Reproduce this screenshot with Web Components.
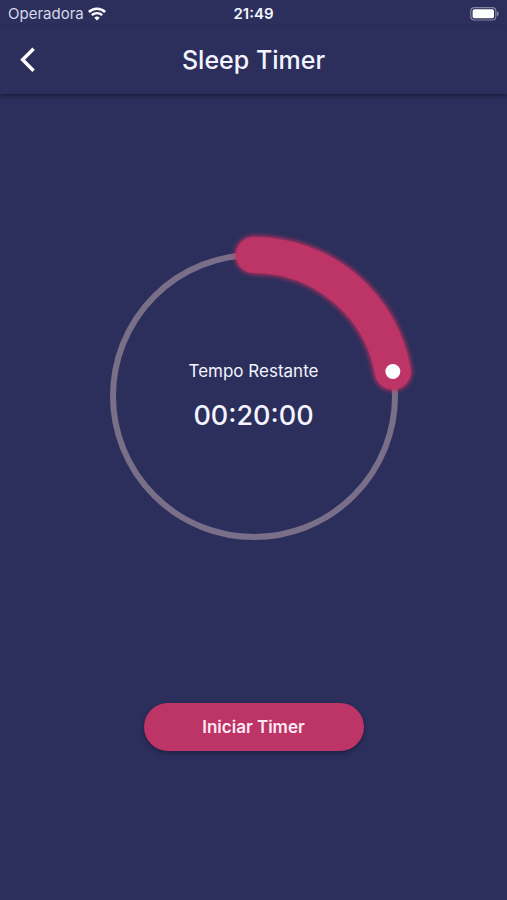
<!DOCTYPE html>
<html lang="pt-BR">
<head>
<meta charset="utf-8">
<meta name="viewport" content="width=device-width, initial-scale=1">
<title>Sleep Timer</title>
<style>
  :root {
    --bg: #2c2f5b;
    --accent: #bd3466;
    --track: #7a6f89;
    --text: #f3f4ff;
  }
  body {
    margin: 0;
    background: var(--bg);
    color: var(--text);
    font-family: Inter, "Liberation Sans", sans-serif;
  }
</style>
</head>
<body>
<sleep-timer-app>
  <status-bar slot="status" carrier="Operadora" time="21:49"></status-bar>
  <app-bar slot="header">Sleep Timer</app-bar>
  <timer-dial slot="dial" minutes="20" max="90">Tempo Restante</timer-dial>
  <pill-button slot="action">Iniciar Timer</pill-button>
</sleep-timer-app>

<script>
class SleepTimerApp extends HTMLElement {
  constructor() {
    super();
    this.attachShadow({ mode: 'open' });
    this.shadowRoot.innerHTML = `
      <style>
        :host {
          display: flex;
          flex-direction: column;
          min-height: 100vh;
        }
        main {
          flex: 1;
          display: grid;
          grid-template-rows: 3fr 1fr;
          justify-items: center;
        }
        .dial {
          display: flex;
          align-items: center;
          justify-content: center;
          width: 100%;
        }
        .action {
          padding-top: 4px;
        }
      </style>
      <slot name="status"></slot>
      <slot name="header"></slot>
      <main>
        <div class="dial"><slot name="dial"></slot></div>
        <div class="action"><slot name="action"></slot></div>
      </main>
    `;
  }
}

class StatusBar extends HTMLElement {
  constructor() {
    super();
    this.attachShadow({ mode: 'open' });
  }

  connectedCallback() {
    this.shadowRoot.innerHTML = `
      <style>
        :host {
          display: grid;
          grid-template-columns: 1fr auto 1fr;
          align-items: center;
          height: 28px;
          padding: 0 8px;
          font-size: 15px;
          line-height: 20px;
        }
        .carrier {
          display: flex;
          align-items: center;
          gap: 4px;
          color: #d5d7ea;
        }
        .time { font-weight: 600; }
        .battery { justify-self: end; }
        svg { display: block; }
      </style>
      <span class="carrier">${this.getAttribute('carrier')}
        <svg width="18" height="14" viewBox="0 0 18 14" fill="none" stroke="#fff" aria-hidden="true">
          <path d="M.9 5a11.6 11.6 0 0 1 16.2 0" stroke-width="2.5"/>
          <path d="M3.8 8.2a7.5 7.5 0 0 1 10.4 0" stroke-width="2.3"/>
          <path d="M9 13.6 6.3 10.7a3.9 3.9 0 0 1 5.4 0z" fill="#fff" stroke="none"/>
        </svg>
      </span>
      <span class="time">${this.getAttribute('time')}</span>
      <svg class="battery" width="29" height="14" viewBox="0 0 29 14" aria-hidden="true">
        <rect x=".8" y=".6" width="25" height="12.4" rx="3.4" fill="none" stroke="#85839f" stroke-width="1.2"/>
        <rect x="2.6" y="2.3" width="21.4" height="9" rx="1.8" fill="#fff"/>
        <path d="M26.8 4.2c2.6 1 2.6 4.2 0 5.2z" fill="#85839f"/>
      </svg>
    `;
  }
}

class AppBar extends HTMLElement {
  constructor() {
    super();
    this.attachShadow({ mode: 'open' });
    this.shadowRoot.innerHTML = `
      <style>
        :host {
          display: grid;
          grid-template-columns: 56px 1fr 56px;
          align-items: center;
          height: 64px;
          padding-bottom: 2px;
          background: var(--bg);
          box-shadow: 0 2px 4px rgba(14, 16, 42, 0.6);
        }
        button {
          display: flex;
          align-items: center;
          justify-content: center;
          width: 56px;
          height: 56px;
          padding: 0;
          border: 0;
          background: none;
          color: #fff;
          cursor: pointer;
        }
        h1 {
          margin: 0;
          font-size: 25px;
          line-height: 32px;
          font-weight: 500;
          text-align: center;
        }
      </style>
      <button type="button" aria-label="Voltar">
        <svg width="16" height="26" viewBox="0 0 16 26" fill="none" stroke="currentColor" stroke-width="3.4">
          <path d="M13.6 1.8 2.6 12.8l11 11"/>
        </svg>
      </button>
      <h1><slot></slot></h1>
    `;
  }
}

class TimerDial extends HTMLElement {
  constructor() {
    super();
    this.attachShadow({ mode: 'open' });
    this.shadowRoot.innerHTML = `
      <style>
        :host {
          display: grid;
          place-items: center;
          width: 100%;
          max-width: 328px;
        }
        svg, .readout, input { grid-area: 1 / 1; }
        svg {
          display: block;
          width: 100%;
          overflow: visible;
        }
        .track { stroke: var(--track); stroke-width: 6; }
        .glow, .arc { stroke: var(--accent); stroke-linecap: round; }
        .glow { stroke: #d42f60; stroke-width: 39; filter: blur(2px); opacity: 0.8; }
        .arc { stroke-width: 36; }
        .readout {
          display: flex;
          flex-direction: column;
          align-items: center;
          gap: 16px;
        }
        label {
          font-size: 17px;
          line-height: 24px;
        }
        output {
          font-size: 27px;
          line-height: 34px;
          font-weight: 500;
        }
        input {
          width: 100%;
          height: 100%;
          margin: 0;
          opacity: 0;
          cursor: pointer;
        }
      </style>
      <svg viewBox="-164 -164 328 328" fill="none" aria-hidden="true">
        <circle class="track" r="141"/>
        <path class="glow"/>
        <path class="arc"/>
        <circle class="knob" r="7.5" fill="#fff"/>
      </svg>
      <div class="readout">
        <label for="range"><slot></slot></label>
        <output for="range"></output>
      </div>
      <input id="range" type="range" min="1" step="1">
    `;
    this.range = this.shadowRoot.querySelector('#range');
    this.range.addEventListener('input', () => this.update());
  }

  connectedCallback() {
    this.range.max = this.getAttribute('max');
    this.range.value = this.getAttribute('minutes');
    this.update();
  }

  update() {
    const minutes = Number(this.range.value);
    // keep just short of a full turn, a closed arc would not be drawn
    const turn = Math.min(minutes / Number(this.range.max), 0.999);
    const angle = turn * 2 * Math.PI;
    const x = 141 * Math.sin(angle);
    const y = -141 * Math.cos(angle);
    const d = `M0 -141A141 141 0 ${turn > 0.5 ? 1 : 0} 1 ${x} ${y}`;

    this.shadowRoot.querySelector('.glow').setAttribute('d', d);
    this.shadowRoot.querySelector('.arc').setAttribute('d', d);

    const knob = this.shadowRoot.querySelector('.knob');
    knob.setAttribute('cx', x);
    knob.setAttribute('cy', y);

    const hh = String(Math.floor(minutes / 60)).padStart(2, '0');
    const mm = String(minutes % 60).padStart(2, '0');
    this.shadowRoot.querySelector('output').textContent = `${hh}:${mm}:00`;
  }
}

class PillButton extends HTMLElement {
  constructor() {
    super();
    this.attachShadow({ mode: 'open' });
    this.shadowRoot.innerHTML = `
      <style>
        :host { display: block; }
        button {
          min-width: 220px;
          height: 48px;
          padding: 0 24px;
          border: 0;
          border-radius: 24px;
          background: var(--accent);
          color: #ffe9f3;
          font: inherit;
          font-size: 17px;
          line-height: 24px;
          font-weight: 600;
          box-shadow: 0 2px 4px rgba(14, 16, 42, 0.5);
          cursor: pointer;
        }
      </style>
      <button type="button"><slot></slot></button>
    `;
  }
}

customElements.define('status-bar', StatusBar);
customElements.define('app-bar', AppBar);
customElements.define('timer-dial', TimerDial);
customElements.define('pill-button', PillButton);
customElements.define('sleep-timer-app', SleepTimerApp);
</script>
</body>
</html>
